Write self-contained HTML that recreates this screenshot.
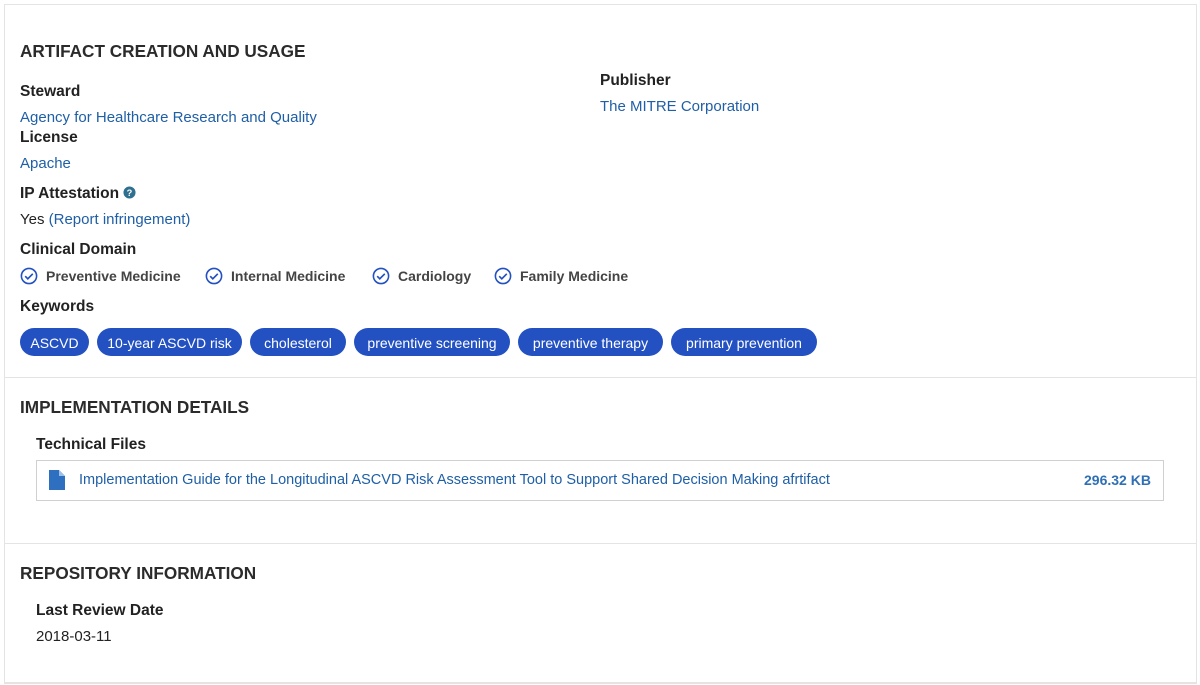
<!DOCTYPE html>
<html><head><meta charset="utf-8"><style>
*{margin:0;padding:0;box-sizing:border-box}
body{width:1200px;height:685px;background:#fff;font-family:"Liberation Sans",sans-serif;color:#222;position:relative;overflow:hidden}
.frame{position:absolute;left:4px;top:4px;width:1193px;height:680px;border:1px solid #e4e4e4;border-bottom:2px solid #e4e4e4}
.a{position:absolute;white-space:nowrap}
h2{position:absolute;font-size:17.2px;font-weight:bold;color:#2b2b2b;white-space:nowrap}
.l{font-size:15.5px;font-weight:bold;color:#222}
.v{font-size:15px;color:#1f5fa6}
.t{font-size:15px;color:#222}
.div{position:absolute;left:5px;width:1191px;height:1px;background:#e4e4e4}
.pill{position:absolute;top:328px;height:28px;border-radius:14px;background:#2351c1;color:#fff;font-size:14px;line-height:29px;text-align:center;padding-top:1px}
.dom{position:absolute;top:267px;font-size:14px;font-weight:bold;color:#444;white-space:nowrap}
.dom svg{position:absolute;left:0;top:0}
.dom span{position:absolute;left:26px;top:1px}
</style></head><body>
<div class="frame"></div>
<h2 style="left:20px;top:41px">ARTIFACT CREATION AND USAGE</h2>
<div class="a l" style="left:20px;top:83px">Steward</div>
<div class="a v" style="left:20px;top:109px">Agency for Healthcare Research and Quality</div>
<div class="a l" style="left:20px;top:129px">License</div>
<div class="a v" style="left:20px;top:155px">Apache</div>
<div class="a l" style="left:20px;top:185px">IP Attestation <svg width="13" height="13" viewBox="0 0 14 14" style="vertical-align:-1px"><circle cx="7" cy="7" r="6.5" fill="#2f6f8f"/><text x="7" y="11" font-size="10" font-weight="bold" fill="#fff" text-anchor="middle" font-family="Liberation Sans">?</text></svg></div>
<div class="a t" style="left:20px;top:211px">Yes <span style="color:#1f5fa6">(Report infringement)</span></div>
<div class="a l" style="left:20px;top:241px">Clinical Domain</div>
<div class="a l" style="left:600px;top:72px">Publisher</div>
<div class="a v" style="left:600px;top:98px">The MITRE Corporation</div>

<div class="dom" style="left:20px"><svg width="18" height="18" viewBox="0 0 18 18"><circle cx="9" cy="9" r="7.6" fill="none" stroke="#2351c1" stroke-width="1.6"/><path d="M5.2 9.2l2.6 2.6 5-5" fill="none" stroke="#2351c1" stroke-width="1.7"/></svg><span>Preventive Medicine</span></div>
<div class="dom" style="left:205px"><svg width="18" height="18" viewBox="0 0 18 18"><circle cx="9" cy="9" r="7.6" fill="none" stroke="#2351c1" stroke-width="1.6"/><path d="M5.2 9.2l2.6 2.6 5-5" fill="none" stroke="#2351c1" stroke-width="1.7"/></svg><span>Internal Medicine</span></div>
<div class="dom" style="left:372px"><svg width="18" height="18" viewBox="0 0 18 18"><circle cx="9" cy="9" r="7.6" fill="none" stroke="#2351c1" stroke-width="1.6"/><path d="M5.2 9.2l2.6 2.6 5-5" fill="none" stroke="#2351c1" stroke-width="1.7"/></svg><span>Cardiology</span></div>
<div class="dom" style="left:494px"><svg width="18" height="18" viewBox="0 0 18 18"><circle cx="9" cy="9" r="7.6" fill="none" stroke="#2351c1" stroke-width="1.6"/><path d="M5.2 9.2l2.6 2.6 5-5" fill="none" stroke="#2351c1" stroke-width="1.7"/></svg><span>Family Medicine</span></div>

<div class="a l" style="left:20px;top:298px">Keywords</div>
<div class="pill" style="left:20px;width:69px">ASCVD</div>
<div class="pill" style="left:97px;width:145px">10-year ASCVD risk</div>
<div class="pill" style="left:250px;width:96px">cholesterol</div>
<div class="pill" style="left:354px;width:156px">preventive screening</div>
<div class="pill" style="left:518px;width:145px">preventive therapy</div>
<div class="pill" style="left:671px;width:146px">primary prevention</div>

<div class="div" style="top:377px"></div>
<h2 style="left:20px;top:397px">IMPLEMENTATION DETAILS</h2>
<div class="a l" style="left:36px;top:436px">Technical Files</div>
<div style="position:absolute;left:36px;top:460px;width:1128px;height:41px;border:1px solid #d0d0d0"></div>
<svg style="position:absolute;left:49px;top:470px" width="16" height="20" viewBox="0 0 16 20"><path d="M0 0h10l6 6v14H0z" fill="#2f6fbf"/><path d="M10 0v6h6" fill="#9cc0e8"/></svg>
<div class="a v" style="left:79px;top:472px;font-size:14.5px">Implementation Guide for the Longitudinal ASCVD Risk Assessment Tool to Support Shared Decision Making afrtifact</div>
<div class="a" style="left:1084px;top:472px;font-size:14px;font-weight:bold;color:#2f6fb5">296.32 KB</div>

<div class="div" style="top:543px"></div>
<h2 style="left:20px;top:563px">REPOSITORY INFORMATION</h2>
<div class="a l" style="left:36px;top:602px">Last Review Date</div>
<div class="a t" style="left:36px;top:628px">2018-03-11</div>
</body></html>
